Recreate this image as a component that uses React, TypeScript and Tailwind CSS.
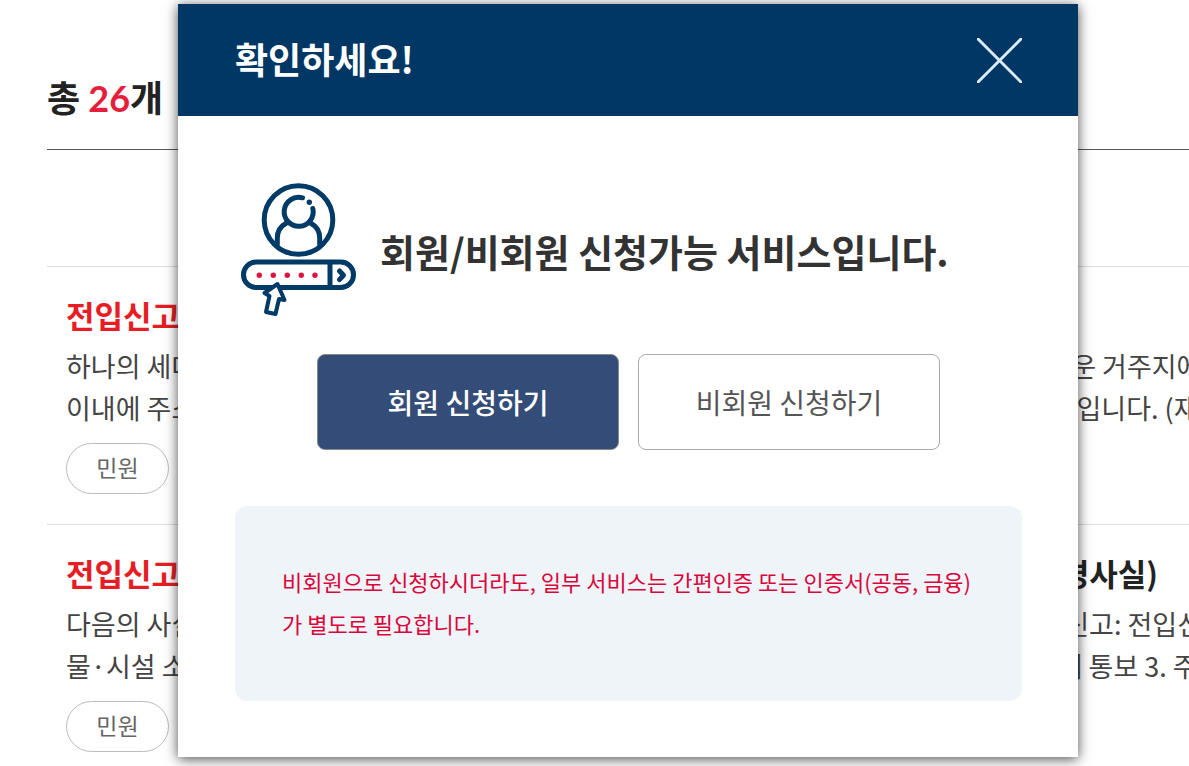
type ServiceItem = {
  id: number;
  keyword: string;
  title: string;
  lines: string[];
  category: string;
};

const services: ServiceItem[] = [
  {
    id: 1,
    keyword: "전입신고",
    title: "",
    lines: [
      "하나의 세대에 속하는 자의 전원 또는 그 일부가 거주지를 이동할 때에는, 신고 의무자가 새로운 거주지에 전입한 날부터 14일",
      "이내에 주소지 변경 및 등록을 위한 전입사실을 새로운 거주지 관할기관에 신고하는 민원사무입니다. (재외국민 포함)",
    ],
    category: "민원",
  },
  {
    id: 2,
    keyword: "전입신고",
    title: " 및 세대주 변경에 따른 각종 공공시설 이용자 신고와 주민등록 변경(변경사실)",
    lines: [
      "다음의 사실을 주민등록 전입신고서와 함께, 한번에 일괄신고할 수 있는 민원입니다. 1. 전입신고: 전입신고 사실",
      "물·시설 소유자에게 통보 2. 세대주 변경 및 주소 등의 변경 사실을 관할 기관의 각 담당자에게 통보 3. 주민등록",
    ],
    category: "민원",
  },
];

const App = () => {
  return (
    <div className="relative min-h-screen overflow-hidden bg-white font-['Noto_Sans_CJK_KR',sans-serif] text-[#222]">
      <ServiceList />
      <ConfirmDialog />
    </div>
  );
};

export default App;

const ServiceList = () => {
  return (
    <main className="pl-[47px] pt-[68px]">
      <h2 className="h-[82px] border-b border-[#555] text-4xl leading-[56px] font-bold">
        총 <span className="font-[Lato,sans-serif] text-[#e61e3c]">26</span>개
      </h2>
      <ul className="mt-[116px]">
        {services.map((item) => (
          <ServiceRow key={item.id} item={item} />
        ))}
      </ul>
    </main>
  );
};

const ServiceRow = ({ item }: { item: ServiceItem }) => {
  return (
    <li className="border-t border-[#ddd] pt-[26px] pb-[30px] pl-[19px] whitespace-nowrap">
      <a href="#" className="block text-[31px] leading-[44px] font-bold">
        <span className="text-[#e71d25]">{item.keyword}</span>
        {item.title}
      </a>
      <p className="mt-2 text-[27px] leading-[42px] text-[#444]">
        {item.lines.map((line) => (
          <span key={line} className="block">
            {line}
          </span>
        ))}
      </p>
      <span className="mt-[14px] flex h-[51px] w-[103px] items-center justify-center rounded-full border border-[#bbb] pb-0.5 text-[23px] text-[#666]">
        {item.category}
      </span>
    </li>
  );
};

const ConfirmDialog = () => {
  return (
    <div className="absolute inset-0 pt-1 pr-[111px] pl-[178px]">
      <section
        role="dialog"
        aria-labelledby="dialog-title"
        className="bg-white pb-14 shadow-[0_2px_12px_rgba(0,0,0,0.7)]"
      >
        <header className="flex h-28 items-center justify-between bg-[#003764] pr-14 pl-[57px]">
          <h1 id="dialog-title" className="pb-1 text-4xl font-bold text-white">
            확인하세요!
          </h1>
          <button type="button" aria-label="닫기">
            <CloseIcon />
          </button>
        </header>

        <div className="pt-[67px] pr-14 pl-[57px]">
          <div className="flex items-center gap-6 pl-1.5">
            <MemberIcon />
            <p className="pt-0.5 text-[38px] leading-[56px] font-bold whitespace-nowrap text-[#333]">
              회원/비회원 신청가능 서비스입니다.
            </p>
          </div>

          <div className="mt-[37px] flex justify-center gap-[19px]">
            <button
              type="button"
              className="h-24 w-[302px] rounded-lg border border-[#888] bg-[#344d78] text-[28px] font-medium text-white"
            >
              회원 신청하기
            </button>
            <button
              type="button"
              className="h-24 w-[302px] rounded-lg border border-[#aaa] bg-white text-[28px] text-[#555]"
            >
              비회원 신청하기
            </button>
          </div>

          <p className="mt-14 min-h-[195px] rounded-xl bg-[#eff4f9] px-[47px] pt-[54px] text-[22px] leading-[42px] break-all text-[#d9053a]">
            비회원으로 신청하시더라도, 일부 서비스는 간편인증 또는 인증서(공동, 금융)가 별도로
            필요합니다.
          </p>
        </div>
      </section>
    </div>
  );
};

const CloseIcon = () => {
  return (
    <svg width="45" height="45" viewBox="0 0 45 45" stroke="#dcebf8" strokeWidth="3">
      <path d="M0 0L45 45M45 0L0 45" />
    </svg>
  );
};

const MemberIcon = () => {
  return (
    <svg
      width="115"
      height="134"
      viewBox="0 0 115 134"
      fill="none"
      stroke="#003a66"
      strokeWidth="5"
      strokeLinecap="round"
      strokeLinejoin="round"
    >
      <circle cx="57.5" cy="37" r="34.3" />
      <path d="M61.5 14.8A14.5 14.5 0 1 0 71.8 25.5" />
      <circle cx="68.3" cy="19.3" r="2.7" fill="#003a66" stroke="none" />
      <path d="M36.300 61V55C36.300 48 40 43 45.500 40M78.700 61V55C78.700 48 75 43 69.500 40" />
      <rect x="2.5" y="79" width="110" height="25.5" rx="12.7" />
      <path d="M89 80V104M98.5 88L102.5 92.3L98.5 96.6" />
      <g fill="#dc1440" stroke="none">
        <circle cx="18.3" cy="92.3" r="2.7" />
        <circle cx="32.3" cy="92.3" r="2.7" />
        <circle cx="46.3" cy="92.3" r="2.7" />
        <circle cx="60.3" cy="92.3" r="2.7" />
        <circle cx="74" cy="92.3" r="2.7" />
      </g>
      <path
        d="M36.5 101L23.5 110L28.500 113L25 129L34.500 131L38 116L43.500 117Z"
        fill="#fff"
        strokeWidth="4"
      />
    </svg>
  );
};
